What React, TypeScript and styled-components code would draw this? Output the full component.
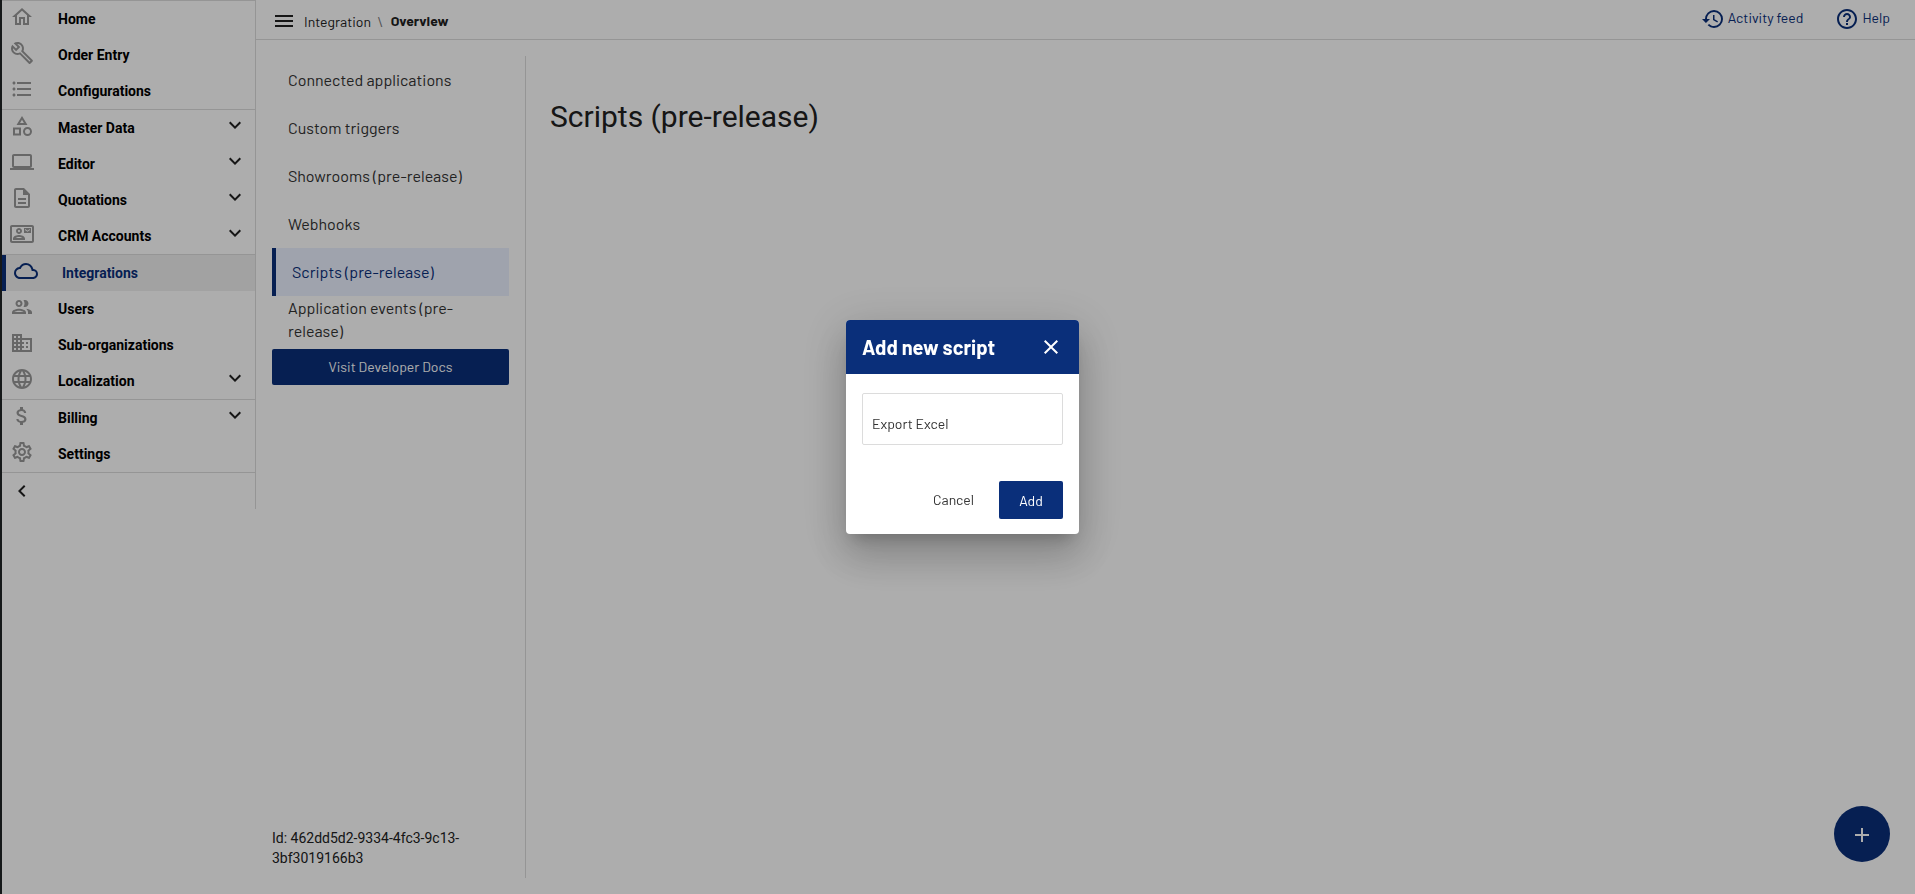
import React from 'react';
import styled, { createGlobalStyle, css } from 'styled-components';
import type { IconType } from 'react-icons';
import {
  MdOutlineHome,
  MdOutlineBuild,
  MdFormatListBulleted,
  MdOutlineCategory,
  MdLaptop,
  MdOutlineDescription,
  MdOutlineContactMail,
  MdOutlineCloud,
  MdOutlinePeople,
  MdBusiness,
  MdLanguage,
  MdAttachMoney,
  MdOutlineSettings,
  MdExpandMore,
  MdChevronLeft,
  MdMenu,
  MdHistory,
  MdHelpOutline,
  MdAdd,
  MdClose,
} from 'react-icons/md';

const navy = '#0a2f7a';
const line = '#dcdcdc';
const body = '"Barlow", Roboto, sans-serif';

const GlobalStyle = createGlobalStyle`
  *, *::before, *::after { box-sizing: border-box; }
  body { margin: 0; background: #fff; font-family: Roboto, sans-serif; font-size: 14px; color: #212121; }
  button, input { font: inherit; }
  a { color: inherit; text-decoration: none; }
  ul { list-style: none; margin: 0; padding: 0; }
`;

const Page = styled.div`
  display: flex;
  align-items: flex-start;
  min-height: 100vh;
  border-left: 2px solid #1f2426;
`;

const Sidebar = styled.nav`
  flex: 0 0 254px;
  border-right: 1px solid ${line};
`;

const NavGroup = styled.ul`
  border-top: 1px solid ${line};
`;

const NavLink = styled.a<{ $active?: boolean }>`
  display: flex;
  align-items: center;
  height: 36px;
  padding: 0 8px;
  font-weight: 700;
  color: #000;
  ${(p) =>
    p.$active &&
    css`
      border-left: 4px solid ${navy};
      background: #efefef;
      color: ${navy};
    `}
`;

const NavIcon = styled.span<{ $active?: boolean }>`
  display: flex;
  width: 48px;
  padding-bottom: 4px;
  font-size: 24px;
  color: ${(p) => (p.$active ? navy : '#999')};
`;

const NavLabel = styled.span`
  flex: 1;
`;

const Chevron = styled(MdExpandMore)`
  margin-bottom: 6px;
  font-size: 24px;
  color: #212121;
`;

const CollapseButton = styled.button`
  display: flex;
  align-items: center;
  width: 100%;
  height: 37px;
  padding: 0 8px;
  border: 0;
  border-top: 1px solid ${line};
  background: none;
  color: #212121;
  font-size: 24px;
`;

const Main = styled.div`
  display: flex;
  flex: 1;
  flex-direction: column;
  min-height: 100vh;
`;

const TopBar = styled.header`
  display: flex;
  align-items: center;
  height: 40px;
  padding: 0 25px 0 16px;
  border-bottom: 1px solid ${line};
  font-family: ${body};
`;

const MenuButton = styled.button`
  display: flex;
  padding: 2px 0 0;
  border: 0;
  background: none;
  color: #212121;
  font-size: 24px;
`;

const Breadcrumb = styled.div`
  display: flex;
  flex: 1;
  gap: 6px;
  padding: 4px 0 0 8px;
`;

const Separator = styled.span`
  padding-right: 2px;
  color: #777;
`;

const Current = styled.strong`
  padding-bottom: 2px;
  font-weight: 700;
  line-height: 15px;
`;

const TopLinks = styled.div`
  display: flex;
  gap: 32px;
  padding-bottom: 1px;
`;

const TopLink = styled.a`
  display: flex;
  align-items: center;
  gap: 3px;
  line-height: 22px;
  color: ${navy};

  svg { font-size: 24px; }
`;

const TopLinkText = styled.span`
  padding-bottom: 2px;
`;

const Content = styled.div`
  display: flex;
  flex: 1;
  padding: 16px;
`;

const SubNav = styled.aside`
  display: flex;
  flex-direction: column;
  width: 254px;
  padding-right: 16px;
  border-right: 1px solid ${line};
`;

const SubLink = styled.a<{ $active?: boolean }>`
  display: flex;
  align-items: center;
  height: 48px;
  padding: 0 16px 2px;
  font-family: ${body};
  font-size: 16px;
  line-height: 23px;
  color: #333;
  ${(p) =>
    p.$active &&
    css`
      border-left: 4px solid ${navy};
      background: #ebf1ff;
      color: ${navy};
    `}
`;

const DocsLink = styled.a`
  display: flex;
  align-items: center;
  justify-content: center;
  height: 36px;
  margin-top: 5px;
  padding-bottom: 2px;
  border-radius: 2px;
  background: ${navy};
  color: #fff;
  font-family: ${body};
`;

const OrgId = styled.p`
  margin: auto 0 0;
  padding-bottom: 10px;
  line-height: 20px;
`;

const Section = styled.main`
  flex: 1;
  padding: 39px 24px;
`;

const Title = styled.h1`
  margin: 0;
  font-size: 30px;
  font-weight: 400;
  line-height: 44px;
`;

const AddFab = styled.button`
  position: fixed;
  right: 25px;
  bottom: 32px;
  display: flex;
  align-items: center;
  justify-content: center;
  width: 56px;
  height: 56px;
  padding: 2px 0 0;
  border: 0;
  border-radius: 50%;
  background: ${navy};
  color: #fff;
  font-size: 24px;
`;

const Backdrop = styled.div`
  position: fixed;
  inset: 0;
  display: flex;
  align-items: center;
  justify-content: center;
  padding: 0 0 40px 10px;
  background: rgba(0, 0, 0, 0.32);
`;

const Dialog = styled.form`
  width: 233px;
  overflow: hidden;
  border-radius: 4px;
  background: #fff;
  font-family: ${body};
  color: #333;
  box-shadow: 0 11px 15px -7px rgba(0, 0, 0, 0.2), 0 24px 38px 3px rgba(0, 0, 0, 0.14),
    0 9px 46px 8px rgba(0, 0, 0, 0.12);
`;

const DialogHeader = styled.div`
  display: flex;
  align-items: center;
  justify-content: space-between;
  height: 54px;
  padding: 0 16px;
  background: ${navy};
  color: #fff;
`;

const DialogTitle = styled.h2`
  margin: 0;
  font-size: 20px;
  font-weight: 700;
`;

const CloseButton = styled.button`
  display: flex;
  padding: 0;
  border: 0;
  background: none;
  color: #fff;
  font-size: 24px;
`;

const DialogBody = styled.div`
  padding: 19px 16px 36px;
`;

const NameInput = styled.input`
  display: block;
  width: 100%;
  height: 52px;
  padding: 9px 9px 0;
  border: 1px solid ${line};
  border-radius: 2px;
  background: #fff;
  color: #333;
  outline: 0;
`;

const DialogActions = styled.div`
  display: flex;
  justify-content: flex-end;
  gap: 8px;
  padding: 0 16px 15px;
`;

const ActionButton = styled.button<{ $primary?: boolean }>`
  height: 38px;
  min-width: 64px;
  padding: ${(p) => (p.$primary ? '0 16px' : '0 17px 2px 16px')};
  border: 0;
  border-radius: 2px;
  background: ${(p) => (p.$primary ? navy : 'transparent')};
  color: ${(p) => (p.$primary ? '#fff' : '#333')};
`;

type NavEntry = { label: string; icon: IconType; expandable?: boolean; active?: boolean };

const navGroups: NavEntry[][] = [
  [
    { label: 'Home', icon: MdOutlineHome },
    { label: 'Order Entry', icon: MdOutlineBuild },
    { label: 'Configurations', icon: MdFormatListBulleted },
  ],
  [
    { label: 'Master Data', icon: MdOutlineCategory, expandable: true },
    { label: 'Editor', icon: MdLaptop, expandable: true },
    { label: 'Quotations', icon: MdOutlineDescription, expandable: true },
    { label: 'CRM Accounts', icon: MdOutlineContactMail, expandable: true },
  ],
  [
    { label: 'Integrations', icon: MdOutlineCloud, active: true },
    { label: 'Users', icon: MdOutlinePeople },
    { label: 'Sub-organizations', icon: MdBusiness },
    { label: 'Localization', icon: MdLanguage, expandable: true },
  ],
  [
    { label: 'Billing', icon: MdAttachMoney, expandable: true },
    { label: 'Settings', icon: MdOutlineSettings },
  ],
];

const subLinks = [
  'Connected applications',
  'Custom triggers',
  'Showrooms (pre-release)',
  'Webhooks',
  'Scripts (pre-release)',
  'Application events (pre-release)',
];

export default function App() {
  return (
    <>
      <GlobalStyle />
      <Page>
        <Sidebar aria-label="Main">
          {navGroups.map((group) => (
            <NavGroup key={group[0].label}>
              {group.map(({ label, icon: Icon, expandable, active }) => (
                <li key={label}>
                  <NavLink href="#" $active={active}>
                    <NavIcon $active={active}>
                      <Icon />
                    </NavIcon>
                    <NavLabel>{label}</NavLabel>
                    {expandable && <Chevron />}
                  </NavLink>
                </li>
              ))}
            </NavGroup>
          ))}
          <CollapseButton type="button" aria-label="Collapse menu">
            <MdChevronLeft />
          </CollapseButton>
        </Sidebar>
        <Main>
          <TopBar>
            <MenuButton type="button" aria-label="Menu">
              <MdMenu />
            </MenuButton>
            <Breadcrumb>
              <a href="#">Integration</a>
              <Separator>\</Separator>
              <Current>Overview</Current>
            </Breadcrumb>
            <TopLinks>
              <TopLink href="#">
                <MdHistory />
                <TopLinkText>Activity feed</TopLinkText>
              </TopLink>
              <TopLink href="#">
                <MdHelpOutline />
                <TopLinkText>Help</TopLinkText>
              </TopLink>
            </TopLinks>
          </TopBar>
          <Content>
            <SubNav>
              {subLinks.map((label) => (
                <SubLink key={label} href="#" $active={label === 'Scripts (pre-release)'}>
                  {label}
                </SubLink>
              ))}
              <DocsLink href="#">Visit Developer Docs</DocsLink>
              <OrgId>Id: 462dd5d2-9334-4fc3-9c13-3bf3019166b3</OrgId>
            </SubNav>
            <Section>
              <Title>Scripts (pre-release)</Title>
            </Section>
          </Content>
        </Main>
        <AddFab type="button" aria-label="Add script">
          <MdAdd />
        </AddFab>
      </Page>
      <Backdrop>
        <Dialog role="dialog" aria-labelledby="dialog-title" onSubmit={(e) => e.preventDefault()}>
          <DialogHeader>
            <DialogTitle id="dialog-title">Add new script</DialogTitle>
            <CloseButton type="button" aria-label="Close">
              <MdClose />
            </CloseButton>
          </DialogHeader>
          <DialogBody>
            <NameInput aria-label="Script name" defaultValue="Export Excel" />
          </DialogBody>
          <DialogActions>
            <ActionButton type="button">Cancel</ActionButton>
            <ActionButton type="submit" $primary>
              Add
            </ActionButton>
          </DialogActions>
        </Dialog>
      </Backdrop>
    </>
  );
}
